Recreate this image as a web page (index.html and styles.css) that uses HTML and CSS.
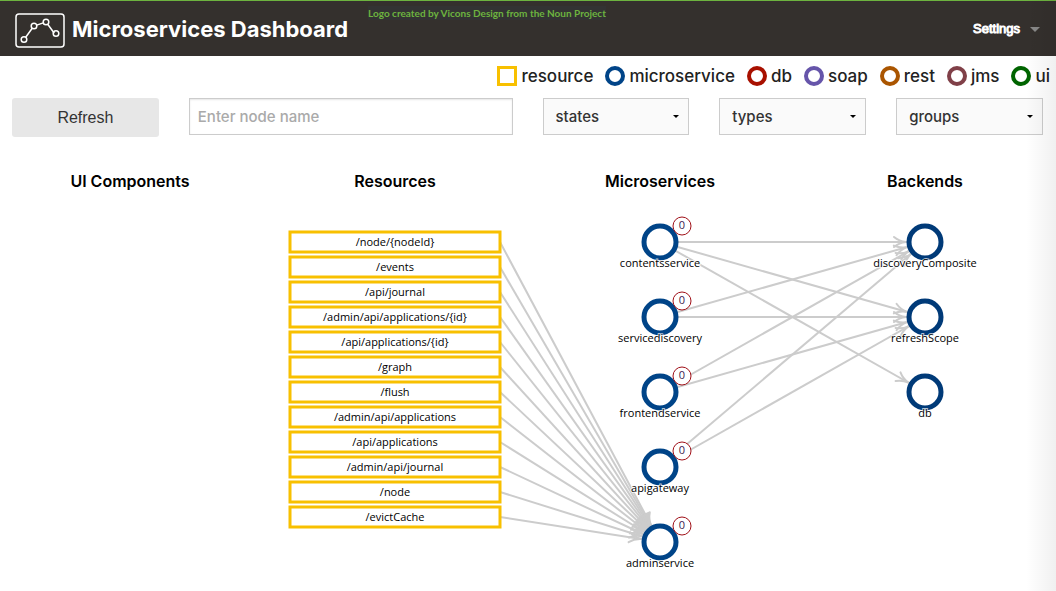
FILE: index.html
```html
<!DOCTYPE html>
<html lang="en">
<head>
<meta charset="utf-8">
<meta name="viewport" content="width=device-width, initial-scale=1">
<title>Microservices Dashboard</title>
<link rel="stylesheet" href="styles.css">
</head>
<body>
<header class="topbar">
  <div class="brand">
    <svg class="brand-logo" viewBox="0 0 50 36" aria-hidden="true">
      <rect x="1" y="1" width="48" height="33" rx="3"/>
      <path d="M10.7 24.2 17.4 15M21.7 12.1l6.6-2.2M32.9 11.5l6.4 8.8"/>
      <circle cx="9" cy="26.5" r="2.8"/>
      <circle cx="19" cy="13" r="2.8"/>
      <circle cx="31" cy="9" r="2.8"/>
      <circle cx="41" cy="20.5" r="2.8"/>
    </svg>
    <h1 class="brand-title">Microservices Dashboard</h1>
  </div>
  <p class="credit">Logo created by Vicons Design from the Noun Project</p>
  <button class="settings" type="button">Settings</button>
</header>

<main>
  <ul class="legend">
    <li class="legend-item"><span class="shape shape-resource"></span>resource</li>
    <li class="legend-item"><span class="shape shape-microservice"></span>microservice</li>
    <li class="legend-item"><span class="shape shape-db"></span>db</li>
    <li class="legend-item"><span class="shape shape-soap"></span>soap</li>
    <li class="legend-item"><span class="shape shape-rest"></span>rest</li>
    <li class="legend-item"><span class="shape shape-jms"></span>jms</li>
    <li class="legend-item"><span class="shape shape-ui"></span>ui</li>
  </ul>

  <form class="filters">
    <button class="refresh" type="button">Refresh</button>
    <input class="search" type="text" placeholder="Enter node name" aria-label="Node name">
    <div class="picker"><select class="picker-select" aria-label="States"><option>states</option></select></div>
    <div class="picker"><select class="picker-select" aria-label="Types"><option>types</option></select></div>
    <div class="picker"><select class="picker-select" aria-label="Groups"><option>groups</option></select></div>
  </form>

  <svg class="graph" viewBox="0 0 1056 430" role="img" aria-label="Service dependency graph">
    <defs>
      <marker id="arrow" markerUnits="userSpaceOnUse" markerWidth="16" markerHeight="14" refX="33" refY="7" orient="auto" overflow="visible">
        <path class="arrowhead" d="M2 2C5 4.500 9 6.500 14 7C9 7.500 5 9.500 2 12"/>
      </marker>
    </defs>

    <g class="column-title">
      <text x="130" y="26">UI Components</text>
      <text x="395" y="26">Resources</text>
      <text x="660" y="26">Microservices</text>
      <text x="925" y="26">Backends</text>
    </g>

    <g class="links">
      <path d="M500 81 660 381"/>
      <path d="M500 106 660 381"/>
      <path d="M500 131 660 381"/>
      <path d="M500 156 660 381"/>
      <path d="M500 181 660 381"/>
      <path d="M500 206 660 381"/>
      <path d="M500 231 660 381"/>
      <path d="M500 256 660 381"/>
      <path d="M500 281 660 381"/>
      <path d="M500 306 660 381"/>
      <path d="M500 331 660 381"/>
      <path d="M500 356 660 381"/>
      <path d="M660 81H925"/>
      <path d="M660 81 925 156"/>
      <path d="M660 81 925 231"/>
      <path d="M660 156 925 81"/>
      <path d="M660 156H925"/>
      <path d="M660 231 925 81"/>
      <path d="M660 231 925 156"/>
      <path d="M660 306 925 81"/>
      <path d="M660 306 925 156"/>
    </g>

    <g class="resources">
      <rect x="290" y="71" width="210" height="20"/><text x="395" y="85">/node/{nodeId}</text>
      <rect x="290" y="96" width="210" height="20"/><text x="395" y="110">/events</text>
      <rect x="290" y="121" width="210" height="20"/><text x="395" y="135">/api/journal</text>
      <rect x="290" y="146" width="210" height="20"/><text x="395" y="160">/admin/api/applications/{id}</text>
      <rect x="290" y="171" width="210" height="20"/><text x="395" y="185">/api/applications/{id}</text>
      <rect x="290" y="196" width="210" height="20"/><text x="395" y="210">/graph</text>
      <rect x="290" y="221" width="210" height="20"/><text x="395" y="235">/flush</text>
      <rect x="290" y="246" width="210" height="20"/><text x="395" y="260">/admin/api/applications</text>
      <rect x="290" y="271" width="210" height="20"/><text x="395" y="285">/api/applications</text>
      <rect x="290" y="296" width="210" height="20"/><text x="395" y="310">/admin/api/journal</text>
      <rect x="290" y="321" width="210" height="20"/><text x="395" y="335">/node</text>
      <rect x="290" y="346" width="210" height="20"/><text x="395" y="360">/evictCache</text>
    </g>

    <g class="services">
      <circle cx="660" cy="81" r="16"/><text x="660" y="106">contentsservice</text>
      <circle cx="660" cy="156" r="16"/><text x="660" y="181">servicediscovery</text>
      <circle cx="660" cy="231" r="16"/><text x="660" y="256">frontendservice</text>
      <circle cx="660" cy="306" r="16"/><text x="660" y="331">apigateway</text>
      <circle cx="660" cy="381" r="16"/><text x="660" y="406">adminservice</text>
    </g>

    <g class="badges">
      <circle cx="682" cy="65" r="9"/><text x="682" y="68">0</text>
      <circle cx="682" cy="140" r="9"/><text x="682" y="143">0</text>
      <circle cx="682" cy="215" r="9"/><text x="682" y="218">0</text>
      <circle cx="682" cy="290" r="9"/><text x="682" y="293">0</text>
      <circle cx="682" cy="365" r="9"/><text x="682" y="368">0</text>
    </g>

    <g class="services backends">
      <circle cx="925" cy="81" r="16"/><text x="925" y="106">discoveryComposite</text>
      <circle cx="925" cy="156" r="16"/><text x="925" y="181">refreshScope</text>
      <circle cx="925" cy="231" r="16"/><text x="925" y="256">db</text>
    </g>
  </svg>
</main>
</body>
</html>
```
FILE: styles.css
```css
* {
  box-sizing: border-box;
}

body {
  position: relative;
  min-height: 100vh;
  margin: 0;
  background: #fff;
  color: #222;
  font-family: Inter, "Open Sans", sans-serif;
  font-size: 16px;
}

/* soft shade along the right edge of the page */
body::after {
  content: "";
  position: absolute;
  top: 0;
  right: 0;
  bottom: 0;
  width: 30px;
  background: linear-gradient(to right, rgba(0, 0, 0, 0), rgba(0, 0, 0, 0.06));
  pointer-events: none;
}

.topbar {
  display: flex;
  align-items: flex-start;
  height: 56px;
  padding: 0 16px 0 15px;
  border-top: 1px solid #6db33f;
  background: #34302d;
}

.brand {
  display: flex;
  align-items: center;
  gap: 7px;
  padding-top: 12px;
}

.brand-logo {
  width: 50px;
  height: 36px;
  fill: none;
  stroke: #fff;
  stroke-width: 1.5;
}

.brand-title {
  margin: 0;
  padding-bottom: 4px;
  color: #fff;
  font-size: 22px;
  font-weight: 700;
  line-height: 30px;
  white-space: nowrap;
}

.credit {
  margin: 5px 0 0 20px;
  background: #333;
  color: #6db33f;
  font-family: Lato, sans-serif;
  font-size: 10px;
  font-weight: 700;
  line-height: 14px;
  white-space: nowrap;
}

.settings {
  display: flex;
  align-items: center;
  gap: 10px;
  margin: 18px 0 0 auto;
  padding: 0;
  border: 0;
  background: none;
  color: #fff;
  font: 13px/20px "Liberation Sans", Arial, sans-serif;
  -webkit-text-stroke: 1px #fff;
}

.settings::after {
  content: "";
  border: 5px solid transparent;
  border-top-color: #888;
  border-bottom: 0;
}

.legend {
  display: flex;
  justify-content: flex-end;
  gap: 12px;
  margin: 0;
  padding: 10px 6px 0 0;
  color: #222;
  font-size: 17px;
  font-weight: 500;
  line-height: 20px;
  list-style: none;
}

.legend-item {
  display: flex;
  gap: 4px;
}

.shape {
  width: 20px;
  height: 20px;
  border: 4px solid;
  border-radius: 50%;
}

.shape-resource {
  border-width: 3px;
  border-color: #f8c000;
  border-radius: 0;
}

.shape-microservice { border-color: #004488; }
.shape-db { border-color: #a81000; }
.shape-soap { border-color: #6655aa; }
.shape-rest { border-color: #aa5500; }
.shape-jms { border-color: #804048; }
.shape-ui { border-color: #006400; }

.filters {
  display: grid;
  grid-template-columns: repeat(6, 1fr);
  gap: 30px;
  align-items: start;
  padding: 12px 13px 0 12px;
}

.refresh {
  height: 39px;
  border: 0;
  border-radius: 3px;
  background: #e7e7e7;
  color: #333;
  font: 16px "Liberation Sans", Arial, sans-serif;
}

.search {
  grid-column: span 2;
  width: 100%;
  height: 37px;
  padding: 0 8px;
  border: 1px solid #ccc;
  border-radius: 0;
  box-shadow: inset 0 1px 2px rgba(0, 0, 0, 0.1);
  font: 500 15px Inter, sans-serif;
}

.search::placeholder {
  color: #aaa;
}

.picker {
  position: relative;
}

.picker::after {
  content: "";
  position: absolute;
  top: 17px;
  right: 10px;
  border: 3px solid transparent;
  border-top-color: #000;
  border-bottom: 0;
  pointer-events: none;
}

.picker-select {
  appearance: none;
  width: 100%;
  height: 37px;
  padding: 0 24px 0 12px;
  border: 1px solid #ccc;
  border-radius: 0;
  background: #fafafa;
  color: #333;
  font: 500 15px Inter, sans-serif;
}

.graph {
  display: block;
  width: 100%;
  margin-top: 24px;
  font-family: "Open Sans", sans-serif;
  font-size: 11px;
  text-anchor: middle;
}

.column-title {
  fill: #000;
  font-family: Inter, sans-serif;
  font-size: 16px;
  font-weight: 600;
}

.links {
  stroke: #ccc;
  stroke-width: 2;
}

.links path {
  marker-end: url(#arrow);
}

.arrowhead {
  fill: none;
  stroke: #ccc;
  stroke-width: 2;
  stroke-linecap: round;
}

.resources rect {
  fill: #fff;
  stroke: #f8c000;
  stroke-width: 3;
}

.services circle {
  fill: #fff;
  stroke: #004488;
  stroke-width: 5;
}

.backends circle {
  stroke: #003a78;
}

.services text {
  paint-order: stroke;
  stroke: rgba(255, 255, 255, 0.7);
  stroke-width: 2px;
}

.badges circle {
  fill: #fff;
  stroke: #a01018;
}

.badges text {
  fill: #402050;
}
```
